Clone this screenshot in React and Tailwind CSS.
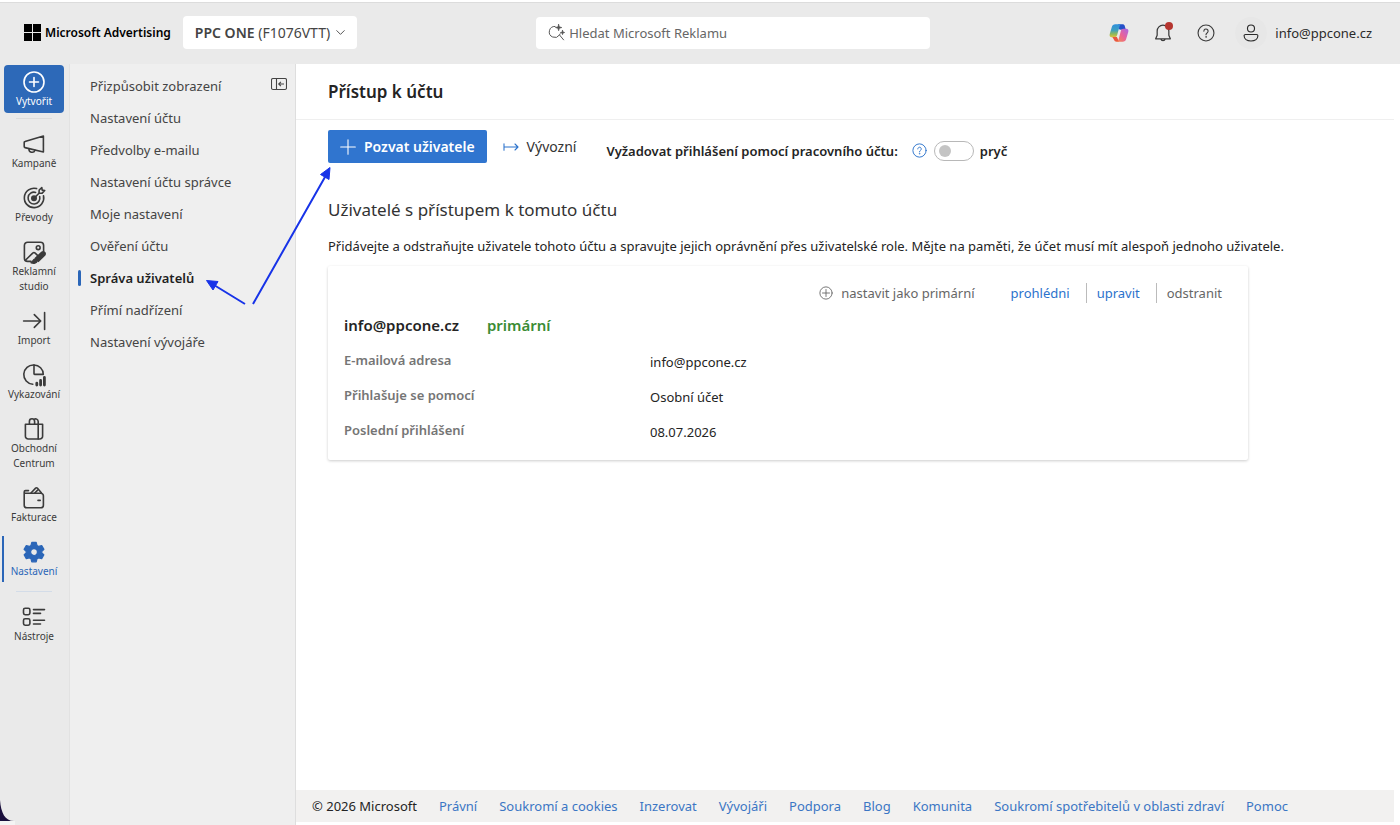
import React, { useState } from 'react';

const Icon = ({ size = 24, className = '', children }) => (
  <svg
    width={size}
    height={size}
    viewBox="0 0 24 24"
    fill="none"
    stroke="currentColor"
    strokeWidth="1.6"
    strokeLinecap="round"
    strokeLinejoin="round"
    className={className}
    aria-hidden="true"
  >
    {children}
  </svg>
);

const MegaphoneIcon = () => (
  <Icon>
    <path d="M21.4 4v16L3 15.6a1 1 0 0 1-.8-1v-4a1 1 0 0 1 .8-1z" />
    <path d="M7 16.8a3.1 3.1 0 0 0 6 1.4" />
  </Icon>
);

const TargetIcon = () => (
  <Icon>
    <path d="M14.6 2.6a9.7 9.7 0 1 0 6.9 7.2" />
    <path d="M13.6 6.4a5.9 5.9 0 1 0 4.1 4.2" />
    <circle cx="12" cy="12.2" r="2.2" fill="currentColor" />
    <path d="M12 12.2l5-5M17 7.2l.2-3.2 2.6-2.4.4 2.5 2.5.4-2.5 2.6z" />
  </Icon>
);

const CreativeIcon = () => (
  <Icon>
    <path d="M9 21.4H5.6A3.2 3.2 0 0 1 2.4 18.2V5.4A3.2 3.2 0 0 1 5.6 2.2h12.8a3.2 3.2 0 0 1 3.2 3.2V11" />
    <path d="M3.4 20.2l7.3-7.1a1.8 1.8 0 0 1 2.5 0l2.3 2.2" />
    <circle cx="16.2" cy="7.7" r="1.9" />
    <path d="M22.6 12.4a1.9 1.9 0 0 1 0 2.7l-6.2 6.2-3-3 6.3-5.9a2 2 0 0 1 2.9 0z" fill="currentColor" />
    <path d="M12.8 19.2c-1.7.2-1.5 2.6-3.6 3.5 2.5.8 5.5.3 5.9-1.5z" fill="currentColor" />
  </Icon>
);

const ImportIcon = () => (
  <Icon>
    <path d="M1.6 12h17M12.3 5.6l6.4 6.4-6.4 6.4M22.6 3.6v16.8" />
  </Icon>
);

const ReportIcon = () => (
  <Icon>
    <path d="M10.8 21.2A9.6 9.6 0 0 1 12 2" />
    <path d="M12 2v8.8a.6.6 0 0 0 .6.6h8.7A9.4 9.4 0 0 0 12 2z" />
    <path d="M14.8 22v-1.8M18.6 22v-4.6M22.4 22v-7.6" strokeWidth="2.8" />
  </Icon>
);

const ShopIcon = () => (
  <Icon>
    <path d="M3.4 7.2h17.2v12a2.8 2.8 0 0 1-2.8 2.8H6.2a2.8 2.8 0 0 1-2.8-2.8z" />
    <path d="M7.4 7V4.4a2.6 2.6 0 0 1 5.2 0V7M12 2.4a2.6 2.6 0 0 1 4.2 2V22" />
  </Icon>
);

const WalletIcon = () => (
  <Icon>
    <path d="M2.2 6v13.2a2.6 2.6 0 0 0 2.6 2.6h14a2.6 2.6 0 0 0 2.6-2.6V9.8a2.6 2.6 0 0 0-2.6-2.6H3.5a1.3 1.3 0 0 1 0-2.6h3" />
    <path d="M9 7l4.6-4.9a1.2 1.2 0 0 1 1.7 0l4 4.7M12.8 7l2.6-2.6M16 14.4h2.2" />
  </Icon>
);

const GearIcon = () => (
  <Icon>
    <path
      d="M9.8 2.4h4.4l.8 3 1.7 1 3-.8 2.2 3.8-2.2 2.2v1l2.2 2.2-2.2 3.8-3-.8-1.7 1-.8 3H9.8l-.8-3-1.7-1-3 .8-2.2-3.8 2.2-2.2v-1L2.1 9.4l2.2-3.8 3 .8 1.7-1zM12 8.7a3.4 3.4 0 1 0 0 6.8 3.4 3.4 0 0 0 0-6.8z"
      fill="currentColor"
      fillRule="evenodd"
      strokeWidth="1.2"
    />
  </Icon>
);

const ToolsIcon = () => (
  <Icon>
    <rect x="1.5" y="3.3" width="6.4" height="6.4" rx="1.6" />
    <rect x="1.5" y="13.8" width="6.4" height="6.4" rx="1.6" />
    <path d="M11.5 4.6h11M11.5 8.4h7M11.5 15.2h11M11.5 19h7" />
  </Icon>
);

const CopilotIcon = () => (
  <svg width="20" height="20" viewBox="0 0 24 24" aria-hidden="true">
    <defs>
      <linearGradient id="cpLeft" x1="0" y1="0" x2="0" y2="1">
        <stop offset="0" stopColor="#2f8fdc" />
        <stop offset=".45" stopColor="#3d9fc0" />
        <stop offset=".75" stopColor="#8fba5a" />
        <stop offset="1" stopColor="#e5c03c" />
      </linearGradient>
      <linearGradient id="cpRight" x1="1" y1="0" x2="0" y2="1">
        <stop offset="0" stopColor="#a768e8" />
        <stop offset=".5" stopColor="#e8629a" />
        <stop offset="1" stopColor="#f58a4b" />
      </linearGradient>
    </defs>
    <path d="M11 1.5h5c1.6 0 2.6.8 3 2.3L20.2 8H14c-1.5 0-2.4-.5-2.9-2z" fill="#2550c8" />
    <path d="M7.5 1.5h7.6c-1.5.4-2.2 1.5-2.6 2.9L9.8 14.5c-.5 1.8-1.5 2.7-3.3 2.7H3.2c-2.2 0-2.9-1.8-2.3-3.9L3.4 4.7c.6-2.1 2-3.2 4.1-3.2z" fill="url(#cpLeft)" />
    <path d="M4 16.9h5.5l2.5 5.6H9.2c-1.7 0-2.7-.8-3.2-2.4z" fill="#e9573f" />
    <path d="M16.5 22.5H8.9c1.5-.4 2.2-1.5 2.6-2.9l2.7-10.1c.5-1.8 1.5-2.7 3.3-2.7h3.3c2.2 0 2.9 1.8 2.3 3.9l-2.5 8.6c-.6 2.1-2 3.2-4.1 3.2z" fill="url(#cpRight)" />
  </svg>
);

const HelpIcon = ({ size, className }) => (
  <Icon size={size} className={className}>
    <circle cx="12" cy="12" r="10.6" strokeWidth="1.5" />
    <path d="M9.2 9.5a2.8 2.8 0 1 1 4.5 2.2c-1 .8-1.7 1.3-1.7 2.5" strokeWidth="1.5" />
    <circle cx="12" cy="17.2" r=".6" fill="currentColor" strokeWidth=".8" />
  </Icon>
);

const railItems = [
  { label: 'Kampaně', icon: MegaphoneIcon },
  { label: 'Převody', icon: TargetIcon },
  { label: 'Reklamní studio', icon: CreativeIcon },
  { label: 'Import', icon: ImportIcon },
  { label: 'Vykazování', icon: ReportIcon },
  { label: 'Obchodní Centrum', icon: ShopIcon },
  { label: 'Fakturace', icon: WalletIcon },
  { label: 'Nastavení', icon: GearIcon, active: true },
];

const menuItems = [
  'Přizpůsobit zobrazení',
  'Nastavení účtu',
  'Předvolby e-mailu',
  'Nastavení účtu správce',
  'Moje nastavení',
  'Ověření účtu',
  'Správa uživatelů',
  'Přímí nadřízení',
  'Nastavení vývojáře',
];

const details = [
  ['E-mailová adresa', 'info@ppcone.cz'],
  ['Přihlašuje se pomocí', 'Osobní účet'],
  ['Poslední přihlášení', '08.07.2026'],
];

const footerLinks = [
  'Právní',
  'Soukromí a cookies',
  'Inzerovat',
  'Vývojáři',
  'Podpora',
  'Blog',
  'Komunita',
  'Soukromí spotřebitelů v oblasti zdraví',
  'Pomoc',
];

const RailItem = ({ label, icon: Glyph, active }) => (
  <a
    href="#"
    className={`relative flex flex-col items-center pt-2 pb-[7px] text-[10px] leading-[15px] ${active ? 'text-[#2b66b8]' : 'text-[#3b3b3b]'}`}
  >
    {active && <span className="absolute left-[2px] top-1 bottom-1 w-[2px] bg-[#2b66b8]" />}
    <Glyph />
    <span className="w-13 text-center">{label}</span>
  </a>
);

const Header = () => (
  <header className="flex items-center h-16 pb-px pl-6 pr-7 bg-[#eaeaea] border-t-2 border-white shadow-[inset_0_1px_0_#dcdcdc]">
    <a href="#" className="flex items-center gap-1 text-black">
      <svg width="17" height="17" viewBox="0 0 17 17" aria-hidden="true">
        <path d="M0 0h8v8H0zM9 0h8v8H9zM0 9h8v8H0zM9 9h8v8H9z" />
      </svg>
      <span className="text-[12px] font-semibold whitespace-nowrap">Microsoft Advertising</span>
    </a>
    <button className="flex items-center ml-3 h-[33px] px-3 rounded bg-white text-[14px] text-[#444] whitespace-nowrap">
      <span><b className="font-semibold">PPC ONE</b> (F1076VTT)</span>
      <Icon size={9} className="ml-[6px]"><path d="M2 7l10 10L22 7" strokeWidth="2.4" /></Icon>
    </button>
    <label className="flex items-center mx-auto w-full max-w-[394px] h-8 px-3 rounded bg-white text-[#555]">
      <Icon size={17}>
        <path d="M10 3.4A7.8 7.8 0 1 0 16.2 15.4L22 22.4M16.2 15.4a7.8 7.8 0 0 0 1-1.6" strokeWidth="1.4" />
        <path d="M15 .5l1 3.5 3.5 1-3.5 1-1 3.5-1-3.5-3.5-1 3.5-1zM20.5 9l.7 2.3 2.3.7-2.3.7-.7 2.3-.7-2.3-2.3-.7 2.3-.7z" fill="currentColor" strokeWidth="1" />
      </Icon>
      <input
        type="search"
        aria-label="Hledat Microsoft Reklamu"
        placeholder="Hledat Microsoft Reklamu"
        className="flex-1 min-w-0 ml-1 bg-transparent outline-none placeholder:text-[#666]"
      />
    </label>
    <div className="flex items-center text-[#3b3b3b]">
      <button aria-label="Copilot"><CopilotIcon /></button>
      <button aria-label="Oznámení" className="relative ml-6">
        <Icon size={20}>
          <path d="M12 2.6a7 7 0 0 0-7 7v5.2l-1.8 4.2h17.6L19 14.8V9.6a7 7 0 0 0-7-7zM9.4 19.2a2.7 2.7 0 0 0 5.2 0" strokeWidth="1.5" />
        </Icon>
        <span className="absolute -top-px right-0 size-2 rounded-full bg-[#b5352f]" />
      </button>
      <button aria-label="Nápověda" className="ml-6"><HelpIcon size={18} /></button>
      <button className="flex items-center ml-5 text-[#2b2b2b]">
        <span className="flex items-center justify-center size-8 mr-2 rounded-full bg-[#e7e7e7]">
          <Icon size={18}>
            <circle cx="12" cy="6" r="4.7" strokeWidth="1.5" />
            <path d="M4.6 14h14.8a1.8 1.8 0 0 1 1.8 1.8c0 4-3.7 6.8-9.2 6.8s-9.2-2.8-9.2-6.8A1.8 1.8 0 0 1 4.6 14z" strokeWidth="1.5" />
          </Icon>
        </span>
        info@ppcone.cz
      </button>
    </div>
  </header>
);

const Rail = () => (
  <nav className="relative flex flex-col shrink-0 w-[70px] pr-px bg-[#eaeaea] border-r border-[#e2e2e2]">
    <button className="flex flex-col items-center mt-px mx-1 h-12 pt-[5px] rounded bg-[#2d69b8] text-white text-[10px] leading-[15px]">
      <Icon><circle cx="12" cy="12" r="10" /><path d="M12 7.5v9M7.5 12h9" /></Icon>
      <span>Vytvořit</span>
    </button>
    <span className="h-px mx-4 my-[5px] bg-[#dcdcdc]" />
    {railItems.map((item) => (
      <RailItem key={item.label} {...item} />
    ))}
    <span className="h-px mx-4 my-[5px] bg-[#d3dce8]" />
    <RailItem label="Nástroje" icon={ToolsIcon} />
    {/* rounded window corner */}
    <svg width="15" height="25" viewBox="0 0 15 25" className="absolute left-0 bottom-0" aria-hidden="true">
      <path d="M0 0c1 13 5 21 14 21H0z" fill="#1a0f3c" />
      <path d="M0 21h15v4H0z" fill="#f4f4f4" />
    </svg>
  </nav>
);

const SideMenu = () => (
  <aside className="flex items-start justify-between shrink-0 w-[226px] pt-[6px] px-2 bg-[#efefef] border-r border-[#dedede]">
    <ul className="text-[#444]">
      {menuItems.map((item) => {
        const active = item === 'Správa uživatelů';
        return (
          <li key={item} className={`flex items-center h-8 ${active ? 'font-semibold text-[#1f1f1f]' : ''}`}>
            <span className={`w-[3px] h-4 mr-[9px] rounded-xs ${active ? 'bg-[#2b66b8]' : ''}`} />
            <a href="#" className="whitespace-nowrap">{item}</a>
          </li>
        );
      })}
    </ul>
    <button aria-label="Sbalit nabídku" className="mt-[6px] text-[#444]">
      <svg width="16" height="16" viewBox="0 0 16 16" fill="none" stroke="currentColor" strokeWidth="1.1" aria-hidden="true">
        <rect x=".5" y="2.5" width="15" height="11" rx="1.5" />
        <path d="M5.5 2.5v11M13 8H7.8M9.9 5.8L7.7 8l2.2 2.2" />
      </svg>
    </button>
  </aside>
);

const UserCard = () => (
  <section className="max-w-[920px] mt-[10px] px-4 pt-[15px] pb-[13px] rounded-xs bg-white shadow-[0_1px_3px_rgba(0,0,0,0.2)]">
    <div className="flex items-center justify-end pr-[10px] h-6 text-[#666]">
      <Icon size={14}><circle cx="12" cy="12" r="10.5" strokeWidth="1.5" /><path d="M12 6v12M6 12h12" strokeWidth="1.5" /></Icon>
      <button className="ml-2">nastavit jako primární</button>
      <a href="#" className="ml-9 pr-4 text-[#2b72cc]">prohlédni</a>
      <a href="#" className="pl-[10px] pr-4 border-l border-[#bbb] text-[#2b72cc]">upravit</a>
      <button className="pl-[10px] border-l border-[#bbb]">odstranit</button>
    </div>
    <h3 className="flex gap-7 mt-2 text-[15px] leading-6 font-semibold">
      <span>info@ppcone.cz</span>
      <span className="text-[#3b8c35]">primární</span>
    </h3>
    <dl className="mt-[5px]">
      {details.map(([term, value]) => (
        <div key={term} className="flex h-[35px]">
          <dt className="w-[306px] pt-2 font-semibold text-[#757575]">{term}</dt>
          <dd className="pt-[10px]">{value}</dd>
        </div>
      ))}
    </dl>
  </section>
);

const Arrows = () => (
  <svg width="140" height="150" viewBox="0 0 140 150" className="absolute left-[200px] top-[160px] pointer-events-none" fill="#1733e8" stroke="#1733e8" aria-hidden="true">
    <path d="M45 144L14 125M53 144L125 17" strokeWidth="2" fill="none" />
    <path d="M6.5 120.5L18 121.5 13 130zM130 7.5L129 19.5 120.5 14.5z" strokeWidth="1" />
  </svg>
);

export default function App() {
  const [required, setRequired] = useState(false);

  return (
    <div className="relative flex flex-col min-h-screen bg-white font-['Noto_Sans','Open_Sans',sans-serif] text-[13px] leading-5 text-[#242424]">
      <Header />
      <div className="flex flex-1">
        <Rail />
        <SideMenu />
        <div className="flex flex-col flex-1 min-w-0 pr-[6px] pb-[3px]">
          <h1 className="flex items-center h-14 pl-8 border-b border-[#efefef] text-[17px] font-semibold">Přístup k účtu</h1>
          <main className="flex-1 pl-8 pt-[10px]">
            <div className="flex items-center">
              <button className="flex items-center h-[33px] px-3 rounded-xs bg-[#3075cf] text-white text-[14px] font-semibold whitespace-nowrap">
                <Icon size={16} className="mr-2"><path d="M12 1v22M1 12h22" /></Icon>
                Pozvat uživatele
              </button>
              <button className="flex items-center ml-4 text-[14px] text-[#333]">
                <Icon size={16} className="mr-2 text-[#2b72cc]"><path d="M1.5 7v10M1.5 12h21M18 7.5l4.5 4.5-4.5 4.5" /></Icon>
                Vývozní
              </button>
              <div className="flex items-center ml-[30px] mt-2 font-semibold whitespace-nowrap">
                <label htmlFor="work-login">Vyžadovat přihlášení pomocí pracovního účtu:</label>
                <HelpIcon size={15} className="ml-[14px] text-[#2b72cc]" />
                <input
                  id="work-login"
                  type="checkbox"
                  role="switch"
                  checked={required}
                  onChange={(e) => setRequired(e.target.checked)}
                  className="appearance-none flex items-center w-10 h-5 ml-[7px] px-1 rounded-full border border-[#b8b8b8] before:content-[''] before:size-3 before:rounded-full before:bg-[#c4c4c4] checked:justify-end"
                />
                <span className="ml-[6px]">pryč</span>
              </div>
            </div>
            <h2 className="mt-[35px] text-[17px] leading-6 text-[#333]">Uživatelé s přístupem k tomuto účtu</h2>
            <p className="mt-[14px]">
              Přidávejte a odstraňujte uživatele tohoto účtu a spravujte jejich oprávnění přes uživatelské role. Mějte na paměti, že účet musí mít alespoň jednoho uživatele.
            </p>
            <UserCard />
          </main>
          <footer className="flex items-center gap-[22px] h-8 pl-4 bg-[#f2f1f0] whitespace-nowrap">
            <span>© 2026 Microsoft</span>
            {footerLinks.map((link) => (
              <a key={link} href="#" className="text-[#3b76c4]">{link}</a>
            ))}
          </footer>
        </div>
      </div>
      <Arrows />
    </div>
  );
}
